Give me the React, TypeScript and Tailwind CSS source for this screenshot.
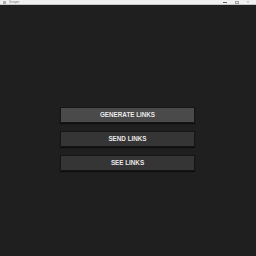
export default function App() {
  const buttons = [
    { label: "GENERATE LINKS", active: true },
    { label: "SEND LINKS", active: false },
    { label: "SEE LINKS", active: false },
  ];

  return (
    <div className="w-[256px] h-[256px] flex flex-col bg-[#1f1f1f] font-['Liberation_Sans',Arial,sans-serif] overflow-hidden">
      {/* window title bar */}
      <div className="h-[5px] bg-[#f0f0f0] border-b border-[#c8c8c8] flex items-center justify-between px-[3px] shrink-0">
        <div className="flex items-center gap-[3px]">
          <div className="w-[3px] h-[3px] bg-[#b0b0b0]" />
          <span className="text-[3px] leading-none text-[#707070]">Scraper</span>
        </div>
        <div className="flex items-center gap-[8px] pr-[4px]">
          <div className="w-[4px] h-px bg-[#606060]" />
          <div className="w-[4px] h-[3px] border border-[#a0a0a0]" />
          <span className="text-[4px] leading-none text-[#707070]">×</span>
        </div>
      </div>

      <div className="flex-1 flex flex-col items-center pt-[102px] pr-px gap-[8px]">
        {buttons.map((b) => (
          <button
            key={b.label}
            className={`w-[135px] h-[16px] flex items-center justify-center border border-[#161616] shadow-[0_1px_1px_rgba(0,0,0,0.5)] text-[6.3px] font-bold text-[#e8e8e8] ${
              b.active ? "bg-[#4a4a4a]" : "bg-[#353535]"
            }`}
          >
            {b.label}
          </button>
        ))}
      </div>
    </div>
  );
}
